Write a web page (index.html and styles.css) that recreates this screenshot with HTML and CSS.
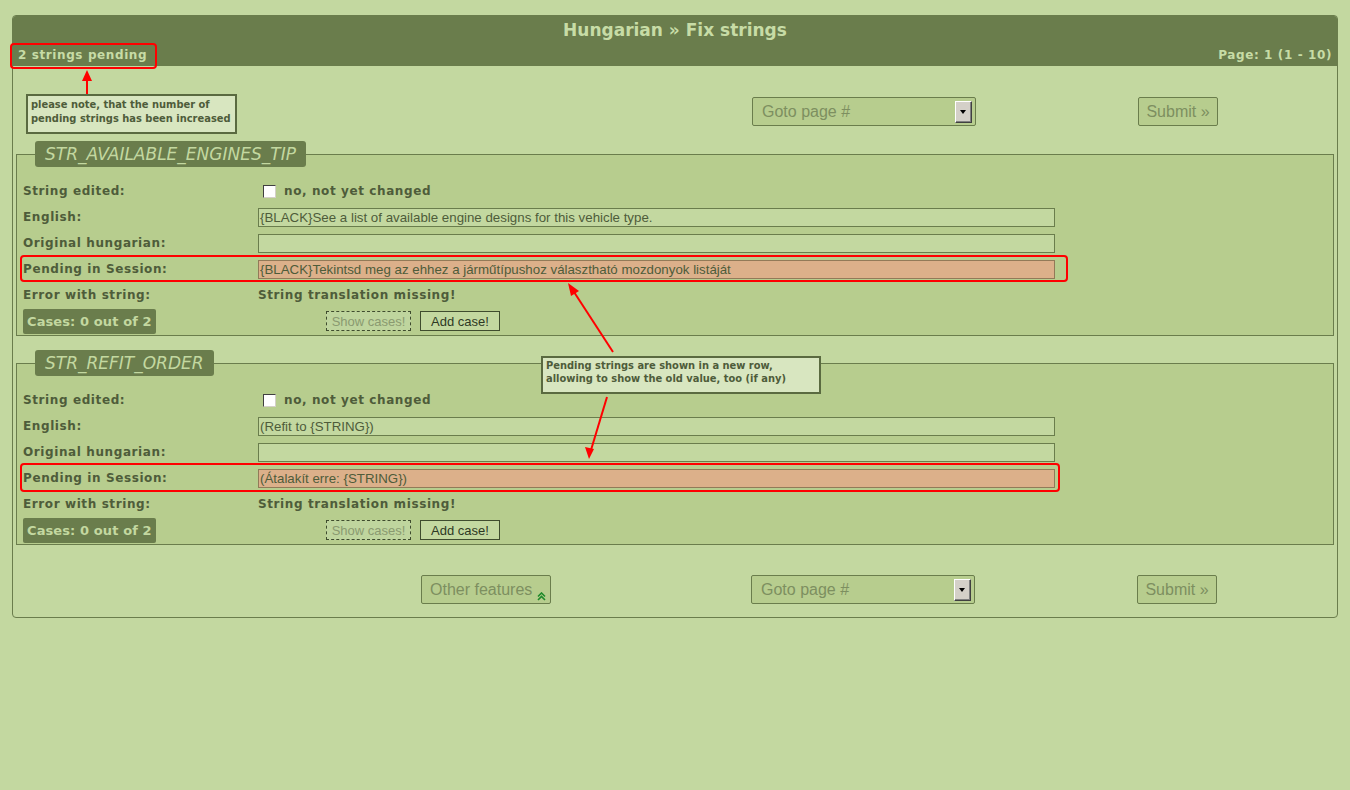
FILE: index.html
```html
<!DOCTYPE html>
<html>
<head>
<meta charset="utf-8">
<title>Hungarian » Fix strings</title>
<link rel="stylesheet" href="styles.css">
</head>
<body>
<div class="page">
  <div class="panel">
    <div class="head">
      <h1>Hungarian » Fix strings</h1>
      <div class="sub"><span>2 strings pending</span><span>Page: 1 (1 - 10)</span></div>
    </div>

    <div class="toolbar top">
      <div class="note">please note, that the number of<br>pending strings has been increased</div>
      <div class="select sel-top">Goto page #<span class="drop"></span></div>
      <button class="submit sub-top">Submit »</button>
    </div>

    <fieldset class="str">
      <legend>STR_AVAILABLE_ENGINES_TIP</legend>
      <div class="rows">
        <div class="lbl">String edited:</div>
        <div class="val chk"><span class="box"></span><span class="bold">no, not yet changed</span></div>
        <div class="lbl">English:</div>
        <div class="val"><div class="field">{BLACK}See a list of available engine designs for this vehicle type.</div></div>
        <div class="lbl">Original hungarian:</div>
        <div class="val"><div class="field"></div></div>
        <div class="lbl">Pending in Session:</div>
        <div class="val"><div class="field pending">{BLACK}Tekintsd meg az ehhez a járműtípushoz választható mozdonyok listáját</div></div>
        <div class="lbl">Error with string:</div>
        <div class="val bold">String translation missing!</div>
        <div class="lbl"><span class="cases">Cases: 0 out of 2</span></div>
        <div class="val acts"><button class="btn dashed">Show cases!</button><button class="btn solid">Add case!</button></div>
      </div>
    </fieldset>

    <fieldset class="str second">
      <legend>STR_REFIT_ORDER</legend>
      <div class="rows">
        <div class="lbl">String edited:</div>
        <div class="val chk"><span class="box"></span><span class="bold">no, not yet changed</span></div>
        <div class="lbl">English:</div>
        <div class="val"><div class="field">(Refit to {STRING})</div></div>
        <div class="lbl">Original hungarian:</div>
        <div class="val"><div class="field"></div></div>
        <div class="lbl">Pending in Session:</div>
        <div class="val"><div class="field pending">(Átalakít erre: {STRING})</div></div>
        <div class="lbl">Error with string:</div>
        <div class="val bold">String translation missing!</div>
        <div class="lbl"><span class="cases">Cases: 0 out of 2</span></div>
        <div class="val acts"><button class="btn dashed">Show cases!</button><button class="btn solid">Add case!</button></div>
      </div>
    </fieldset>

    <div class="toolbar bottom">
      <button class="submit other">Other features <svg class="chev" width="9" height="9" viewBox="0 0 9 9"><path d="M1 4.5 L4.5 1 L8 4.5 M1 8 L4.5 4.5 L8 8" fill="none" stroke="#1f8a2a" stroke-width="1.6"/></svg></button>
      <div class="select sel-bot">Goto page #<span class="drop"></span></div>
      <button class="submit sub-bot">Submit »</button>
    </div>
  </div>

  <div class="callout">Pending strings are shown in a new row,<br>allowing to show the old value, too (if any)</div>

  <svg class="annot" width="1350" height="790" viewBox="0 0 1350 790">
    <g fill="none" stroke="#ff0000" stroke-width="2">
      <rect x="11" y="44" width="145" height="24" rx="3"/>
      <rect x="21" y="256" width="1046" height="25" rx="3"/>
      <rect x="21" y="464" width="1038" height="27" rx="3"/>
      <line x1="87" y1="94" x2="87" y2="78"/>
      <line x1="613" y1="352" x2="574" y2="292"/>
      <line x1="607" y1="397" x2="591" y2="450"/>
    </g>
    <g fill="#ff0000">
      <polygon points="87,70 82,81 92,81"/>
      <polygon points="568,283 571,296 579,291"/>
      <polygon points="589,459 585,447 594,449"/>
    </g>
  </svg>
</div>
</body>
</html>
```

FILE: styles.css
```css
* { box-sizing: border-box; }

body {
  margin: 0;
  background: #c3d8a0;
  font-family: "DejaVu Sans", Verdana, sans-serif;
  color: #4e5c3a;
}

.page {
  position: relative;
  width: 1350px;
  height: 790px;
  padding: 15px 0 0 12px;
}

.panel {
  width: 1326px;
  border: 1px solid #6a7d4c;
  border-radius: 4px;
  background: #c3d8a0;
  overflow: hidden;
}

.head {
  background: #6a7d4c;
  height: 51px;
  margin-top: -1px;
  padding-top: 4px;
  color: #c7dca6;
}

.head h1 {
  margin: 0;
  text-align: center;
  font-size: 17px;
  line-height: 22px;
  font-weight: bold;
}

.sub {
  display: flex;
  justify-content: space-between;
  margin-top: 6px;
  padding: 0 5px 0 5px;
  font-size: 12px;
  font-weight: bold;
  line-height: 16px;
  letter-spacing: 0.6px;
}

.toolbar {
  display: flex;
  align-items: flex-start;
}

.toolbar.top {
  height: 75px;
  padding-top: 28px;
}

.toolbar.bottom {
  height: 72px;
  padding-top: 30px;
}

.note {
  margin-left: 13px;
  width: 211px;
  height: 40px;
  background: #d8e6c0;
  border: 2px solid #5a6a40;
  padding: 2px 3px;
  font-family: "DejaVu Sans Condensed", "DejaVu Sans", sans-serif;
  font-size: 11px;
  font-weight: bold;
  line-height: 14px;
  color: #4e5c3a;
  white-space: nowrap;
}

.select {
  position: relative;
  width: 224px;
  height: 29px;
  border: 1px solid #6a7d4c;
  border-radius: 2px;
  background: #b7cd8e;
  font-family: "Liberation Sans", Arial, sans-serif;
  font-size: 16px;
  line-height: 27px;
  padding-left: 9px;
  color: #7d8f60;
}

.drop {
  position: absolute;
  right: 3px;
  top: 3px;
  width: 17px;
  height: 22px;
  background: #d4d0c8;
  border-top: 1px solid #ffffff;
  border-left: 1px solid #ffffff;
  border-right: 1px solid #404040;
  border-bottom: 1px solid #404040;
  box-shadow: inset -1px -1px 0 #808080;
}

.drop::after {
  content: "";
  position: absolute;
  left: 4px;
  top: 8px;
  border-left: 3.5px solid transparent;
  border-right: 3.5px solid transparent;
  border-top: 4px solid #000;
}

.sel-top { margin-left: 515px; margin-top: 3px; }
.sel-bot { margin-left: 200px; }

.submit {
  height: 29px;
  border: 1px solid #6a7d4c;
  border-radius: 2px;
  background: #b7cd8e;
  font-family: "Liberation Sans", Arial, sans-serif;
  font-size: 16px;
  line-height: 27px;
  color: #7d8f60;
  padding: 0;
  white-space: nowrap;
  text-align: center;
}

.sub-top { width: 80px; margin-left: 162px; margin-top: 3px; }
.sub-bot { width: 80px; margin-left: 162px; }
.other {
  width: 130px;
  margin-left: 408px;
  text-align: left;
  padding-left: 8px;
}
.chev { vertical-align: -6px; margin-left: 0; }

fieldset.str {
  margin: 0 0 0 3px;
  width: 1318px;
  border: 1px solid #6a7d4c;
  background: #b7cd8e;
  padding: 11px 0 1px 6px;
}

fieldset.second { margin-top: 14px; }

legend {
  margin-left: 12px;
  padding: 0 10px;
  height: 26px;
  line-height: 26px;
  background: #6a7d4c;
  color: #c3d8a0;
  border-radius: 3px;
  font-size: 17px;
  font-style: italic;
}

.rows {
  display: grid;
  grid-template-columns: 235px 797px;
  grid-auto-rows: 26px;
  align-items: center;
}

.lbl {
  font-size: 12px;
  font-weight: bold;
  letter-spacing: 0.6px;
  color: #4e5c3a;
}

.val { font-size: 12px; }

.bold {
  font-weight: bold;
  font-size: 12px;
  letter-spacing: 0.6px;
}

.chk { display: flex; align-items: center; }

.box {
  width: 13px;
  height: 13px;
  margin-left: 5px;
  margin-right: 8px;
  background: #fff;
  border-top: 1px solid #404040;
  border-left: 1px solid #404040;
  border-right: 1px solid #d4d0c8;
  border-bottom: 1px solid #d4d0c8;
}

.field {
  width: 797px;
  height: 19px;
  border: 1px solid #6a7d4c;
  background: #c3d8a0;
  font-family: "Liberation Sans", Arial, sans-serif;
  font-size: 13.3px;
  line-height: 17px;
  padding-left: 1px;
  color: #4e5c3a;
  white-space: nowrap;
}

.field.pending {
  background: #dcb08a;
  border-color: #927a58;
}

.cases {
  display: inline-block;
  height: 25px;
  line-height: 25px;
  padding: 0 4px;
  background: #6a7d4c;
  color: #c3d8a0;
  font-size: 13px;
  border-radius: 2px;
  letter-spacing: 0.1px;
}

.acts { display: flex; align-items: center; padding-left: 68px; }

.btn {
  height: 20px;
  font-family: "Liberation Sans", Arial, sans-serif;
  font-size: 13px;
  padding: 0 4px;
  background: transparent;
  white-space: nowrap;
}

.btn.dashed {
  width: 85px;
  border: 1px dashed #3f4c2e;
  color: #8a9a70;
  background: #bfd59e;
}

.btn.solid {
  width: 80px;
  margin-left: 9px;
  border: 1px solid #3f4c2e;
  background: #c3d8a0;
  color: #2e3824;
}

.callout {
  position: absolute;
  left: 541px;
  top: 356px;
  width: 280px;
  height: 38px;
  background: #d8e6c0;
  border: 2px solid #5a6a40;
  padding: 1px 3px;
  font-family: "DejaVu Sans Condensed", "DejaVu Sans", sans-serif;
  font-size: 11px;
  font-weight: bold;
  line-height: 13px;
  color: #4e5c3a;
  white-space: nowrap;
}

.annot {
  position: absolute;
  left: 0;
  top: 0;
  pointer-events: none;
}
```
